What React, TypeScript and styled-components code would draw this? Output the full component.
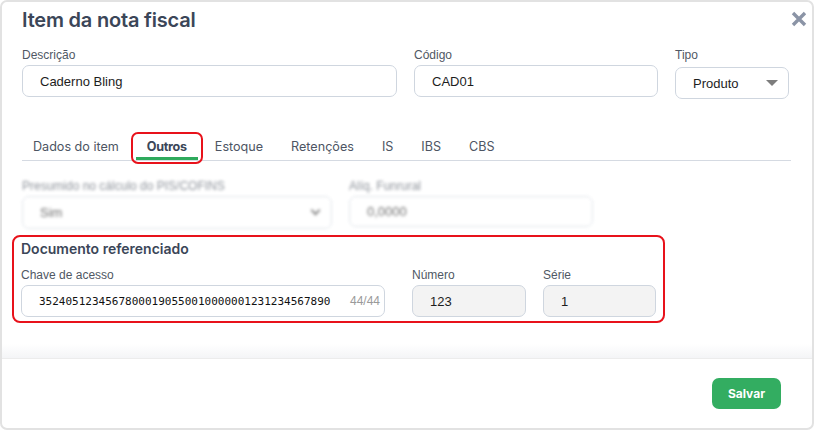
import styled, { createGlobalStyle } from "styled-components";

const GlobalStyle = createGlobalStyle`
    html, body {
        margin: 0;
        padding: 0;
        background: #ffffff;
    }
    * {
        box-sizing: border-box;
    }
`;

const Modal = styled.div`
    width: 814px;
    height: 430px;
    border: 2px solid #e2e2e2;
    border-radius: 7px;
    background: #fff;
    display: flex;
    flex-direction: column;
    overflow: hidden;
`;

const Header = styled.div`
    display: flex;
    justify-content: space-between;
    align-items: flex-start;
    padding: 6px 4px 0 20px;
    height: 46px;
`;

const Title = styled.h1`
    margin: 0;
    font-family: Inter, "Noto Sans", sans-serif;
    font-size: 20px;
    font-weight: 600;
    color: #3b4658;
    letter-spacing: -0.2px;
`;

const Close = styled.button`
    border: none;
    background: none;
    padding: 0;
    width: 18px;
    height: 18px;
    cursor: pointer;
    margin-top: 2px;
`;

const Body = styled.div`
    flex: 1;
    padding: 0 21px 0 20px;
    display: flex;
    flex-direction: column;
    background: linear-gradient(to bottom, #fff 0, #fff 296px, #f3f4f6 311px);
`;

const Row = styled.div<{ $gap?: number }>`
    display: flex;
    gap: ${(p) => p.$gap ?? 17}px;
    align-items: flex-start;
`;

const Field = styled.div<{ $w: number; $drop?: number }>`
    width: ${(p) => p.$w}px;
    display: flex;
    flex-direction: column;
    gap: 3px;
    & > div {
        margin-top: ${(p) => p.$drop ?? 0}px;
    }
`;

const Label = styled.label`
    font-family: "Liberation Sans", Arial, sans-serif;
    font-size: 12px;
    line-height: 14px;
    color: #505864;
`;

const Input = styled.div<{ $muted?: boolean; $h?: number }>`
    height: ${(p) => p.$h ?? 32}px;
    border: 1px solid #cfd6df;
    border-radius: 7px;
    background: ${(p) => (p.$muted ? "#f3f3f3" : "#fff")};
    display: flex;
    align-items: center;
    justify-content: space-between;
    padding: 0 12px 0 17px;
    font-family: "Liberation Sans", Arial, sans-serif;
    font-size: 13px;
    color: #1d1d1d;
`;

const Caret = styled.span`
    width: 0;
    height: 0;
    border-left: 6px solid transparent;
    border-right: 6px solid transparent;
    border-top: 6px solid #7d7d7d;
    margin-right: -2px;
`;

const Tabs = styled.div`
    display: flex;
    gap: 6px;
    margin-top: 33px;
    border-bottom: 1px solid #d5dae2;
    height: 29px;
`;

const Tab = styled.div<{ $active?: boolean }>`
    position: relative;
    padding: 0 11px;
    height: 28px;
    display: flex;
    align-items: center;
    font-family: Inter, "Noto Sans", sans-serif;
    font-size: 12.6px;
    font-weight: ${(p) => (p.$active ? 700 : 400)};
    letter-spacing: ${(p) => (p.$active ? "-0.3px" : "0")};
    color: ${(p) => (p.$active ? "#3b4658" : "#4d5563")};
    border-bottom: 3px solid ${(p) => (p.$active ? "#2eaa5c" : "transparent")};
    padding-top: 3px;

    ${(p) =>
        p.$active &&
        `
        &::after {
            content: "";
            position: absolute;
            left: -5px;
            right: -5px;
            top: 0;
            bottom: -7px;
            border: 2px solid #e8121b;
            border-radius: 7px;
        }
    `}
`;

const Faded = styled.div`
    margin-top: 18px;
    filter: blur(1.4px);
    opacity: 0.65;
`;

const Chevron = styled.span`
    width: 7px;
    height: 7px;
    border-right: 2px solid #555;
    border-bottom: 2px solid #555;
    transform: rotate(45deg);
    margin-top: -4px;
`;

const Section = styled.section`
    margin: 6px 0 0 -10px;
    width: 653px;
    border: 2px solid #e8121b;
    border-radius: 8px;
    padding: 3px 7px 4px 7px;
`;

const SectionTitle = styled.h2`
    margin: 0 0 11px 0;
    font-family: Inter, "Noto Sans", sans-serif;
    font-size: 14px;
    font-weight: 600;
    color: #3b4658;
    line-height: 17px;
`;

const Key = styled.span`
    font-family: "DejaVu Sans Mono", monospace;
    font-size: 11px;
    color: #111;
`;

const Counter = styled.span`
    font-family: "Liberation Sans", Arial, sans-serif;
    font-size: 12px;
    color: #9a9a9a;
    margin-right: -8px;
`;

const Footer = styled.div`
    height: 70px;
    border-top: 1px solid #ececec;
    display: flex;
    align-items: center;
    justify-content: flex-end;
    padding: 0 31px 1px 0;
`;

const SaveButton = styled.button`
    width: 69px;
    height: 31px;
    border: none;
    border-radius: 7px;
    background: #33ad61;
    color: #fff;
    font-family: Inter, "Noto Sans", sans-serif;
    font-size: 12px;
    font-weight: 700;
    cursor: pointer;
`;

const tabs = ["Dados do item", "Outros", "Estoque", "Retenções", "IS", "IBS", "CBS"];

export default function App() {
    return (
        <>
            <GlobalStyle />
            <Modal>
                <Header>
                    <Title>Item da nota fiscal</Title>
                    <Close aria-label="Fechar">
                        <svg width="18" height="18" viewBox="0 0 18 18">
                            <path d="M3 3 L15 15 M15 3 L3 15" stroke="#8b94a6" strokeWidth="3.4" strokeLinecap="butt" />
                        </svg>
                    </Close>
                </Header>

                <Body>
                    <Row>
                        <Field $w={375}>
                            <Label>Descrição</Label>
                            <Input>Caderno Bling</Input>
                        </Field>
                        <Field $w={244}>
                            <Label>Código</Label>
                            <Input>CAD01</Input>
                        </Field>
                        <Field $w={114} $drop={2}>
                            <Label>Tipo</Label>
                            <Input>
                                <span>Produto</span>
                                <Caret />
                            </Input>
                        </Field>
                    </Row>

                    <Tabs>
                        {tabs.map((t) => (
                            <Tab key={t} $active={t === "Outros"}>
                                {t}
                            </Tab>
                        ))}
                    </Tabs>

                    <Faded>
                        <Row>
                            <Field $w={310}>
                                <Label>Presumido no cálculo do PIS/COFINS</Label>
                                <Input $h={33}>
                                    <span>Sim</span>
                                    <Chevron />
                                </Input>
                            </Field>
                            <Field $w={244}>
                                <Label>Alíq. Funrural</Label>
                                <Input $h={31}>0,0000</Input>
                            </Field>
                        </Row>
                    </Faded>

                    <Section>
                        <SectionTitle>Documento referenciado</SectionTitle>
                        <Row $gap={27}>
                            <Field $w={365}>
                                <Label>Chave de acesso</Label>
                                <Input>
                                    <Key>35240512345678000190550010000001231234567890</Key>
                                    <Counter>44/44</Counter>
                                </Input>
                            </Field>
                            <Row>
                                <Field $w={114}>
                                    <Label>Número</Label>
                                    <Input $muted>123</Input>
                                </Field>
                                <Field $w={113}>
                                    <Label>Série</Label>
                                    <Input $muted>1</Input>
                                </Field>
                            </Row>
                        </Row>
                    </Section>
                </Body>

                <Footer>
                    <SaveButton>Salvar</SaveButton>
                </Footer>
            </Modal>
        </>
    );
}
